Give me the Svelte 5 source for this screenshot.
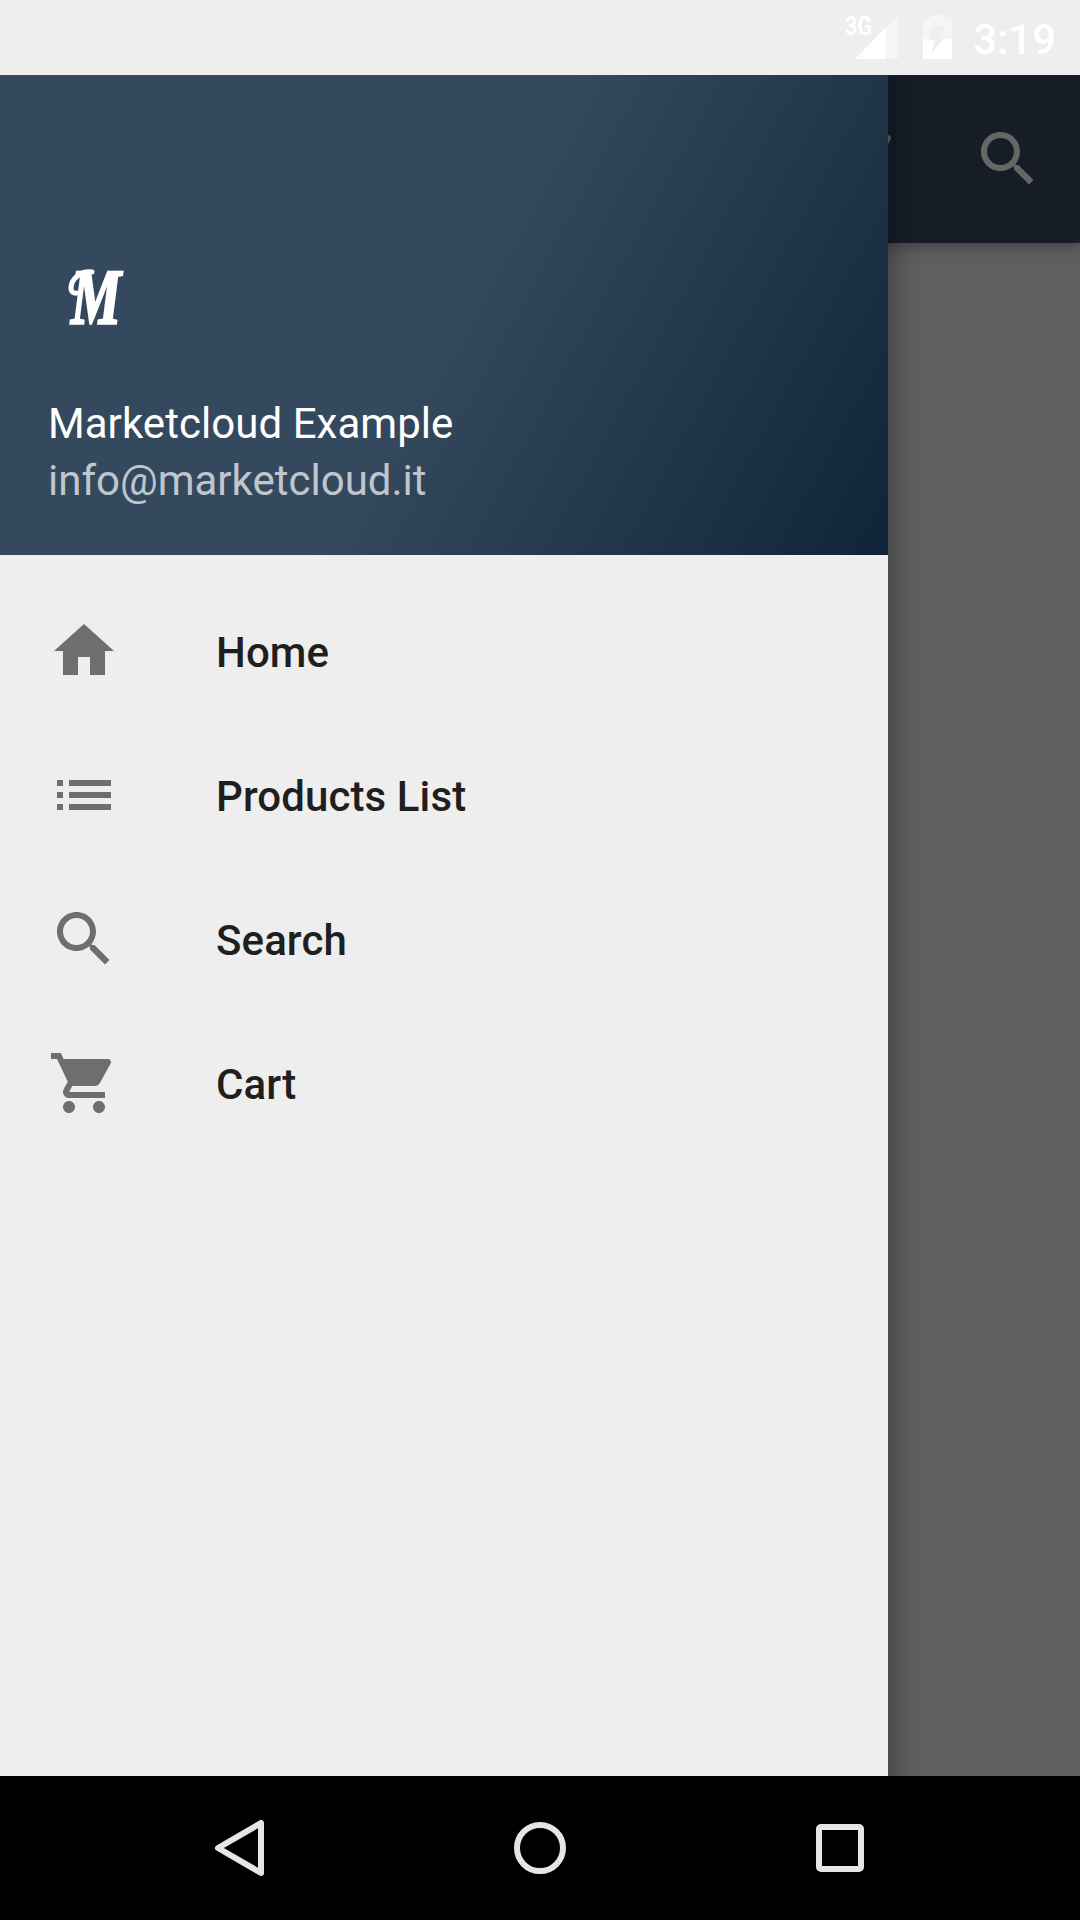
<script>
  const paths = {
    home: 'M10 20v-6h4v6h5v-8h3L12 3 2 12h3v8z',
    list: 'M3 13h2v-2H3v2zm0 4h2v-2H3v2zm0-8h2V7H3v2zm4 4h14v-2H7v2zm0 4h14v-2H7v2zM7 7v2h14V7H7z',
    search:
      'M15.5 14h-.79l-.28-.27C15.41 12.59 16 11.11 16 9.5 16 5.91 13.09 3 9.5 3S3 5.91 3 9.5 5.91 16 9.5 16c1.61 0 3.09-.59 4.23-1.57l.27.28v.79l5 4.99L20.49 19l-4.99-5zm-6 0C7.01 14 5 11.99 5 9.5S7.01 5 9.5 5 14 7.01 14 9.5 11.99 14 9.5 14z',
    cart:
      'M7 18c-1.1 0-1.99.9-1.99 2S5.9 22 7 22s2-.9 2-2-.9-2-2-2zM1 2v2h2l3.6 7.59-1.35 2.45c-.16.28-.25.61-.25.96 0 1.1.9 2 2 2h12v-2H7.42c-.14 0-.25-.11-.25-.25l.03-.12.9-1.63h7.45c.75 0 1.41-.41 1.75-1.03l3.58-6.49c.08-.14.12-.31.12-.48 0-.55-.45-1-1-1H5.21l-.94-2H1zm16 16c-1.1 0-1.99.9-1.99 2s.89 2 1.99 2 2-.9 2-2-.9-2-2-2z',
  };
  const items = [
    { icon: 'home', label: 'Home' },
    { icon: 'list', label: 'Products List' },
    { icon: 'search', label: 'Search' },
    { icon: 'cart', label: 'Cart' },
  ];
</script>

{#snippet icon(name)}
  <svg class="icon" viewBox="0 0 24 24"><path d={paths[name]} /></svg>
{/snippet}

<div class="screen">
  <header class="status">
    <svg class="signal" viewBox="0 0 54 48">
      <path class="faint" d="M42 16.5V48h12V5z" />
      <path d="M11 48h31V16.5z" />
      <text x="1" y="24" textLength="27" lengthAdjust="spacingAndGlyphs">3G</text>
    </svg>
    <svg class="battery" viewBox="0 0 29 44">
      <path class="faint" d="M7 0h15v4h7v20H0V4h7z" />
      <path d="M0 24h29v20H0z" />
      <path class="bolt" d="M9.500 10.500H23l-6.500 10H23L8 39l4-13.500H6z" />
    </svg>
    <span class="time">3:19</span>
  </header>

  <main class="stage">
    <div class="page">
      <div class="toolbar">
        {@render icon('cart')}
        {@render icon('search')}
      </div>
    </div>

    <aside class="drawer">
      <div class="account">
        <svg class="logo" viewBox="0 0 60 60">
          <path d="M25 5C13 3 4 13 4 21c0 4 3 6 6 5" />
          <text x="4" y="56" textLength="50" lengthAdjust="spacingAndGlyphs">M</text>
        </svg>
        <div class="name">Marketcloud Example</div>
        <div class="email">info@marketcloud.it</div>
      </div>
      <nav>
        {#each items as item}
          <div class="row">
            {@render icon(item.icon)}
            <span>{item.label}</span>
          </div>
        {/each}
      </nav>
    </aside>
  </main>

  <footer class="navbar">
    <svg viewBox="0 0 72 72"><path d="M57 11v50L14 36z" /></svg>
    <svg viewBox="0 0 72 72"><circle cx="36" cy="36" r="23" /></svg>
    <svg viewBox="0 0 72 72"><rect x="15" y="15" width="42" height="42" rx="2" /></svg>
  </footer>
</div>

<style>
  :global(body) {
    margin: 0;
  }
  .screen {
    width: 1080px;
    height: 1920px;
    display: flex;
    flex-direction: column;
    overflow: hidden;
    background: #eee;
    font-family: Roboto, sans-serif;
    font-size: 42px;
  }
  svg {
    display: block;
    flex: none;
    overflow: visible;
  }
  .status {
    height: 75px;
    flex: none;
    box-sizing: border-box;
    display: flex;
    justify-content: flex-end;
    align-items: flex-start;
    padding-right: 24px;
    color: #fff;
    fill: #fff;
  }
  .faint {
    fill: #f5f5f5;
  }
  .bolt {
    fill: #eee;
  }
  .signal {
    width: 54px;
    height: 48px;
    margin: 11px 25px 0 0;
  }
  .signal text {
    font-size: 26px;
    font-weight: 700;
  }
  .battery {
    width: 29px;
    height: 44px;
    margin: 15px 21px 0 0;
  }
  .time {
    font-weight: 500;
    line-height: 50px;
    margin-top: 15px;
  }
  .stage {
    flex: 1;
    min-height: 0;
    display: grid;
    grid-template: 100% / 100%;
    overflow: hidden;
  }
  .page,
  .drawer {
    grid-area: 1 / 1;
  }
  .page {
    background: #5f5f5f;
  }
  .toolbar {
    height: 168px;
    box-sizing: border-box;
    display: flex;
    justify-content: flex-end;
    align-items: center;
    gap: 72px;
    padding-right: 36px;
    background: #161d26;
    fill: #666;
    box-shadow: 0 3px 14px rgba(0, 0, 0, 0.35);
  }
  .icon {
    width: 72px;
    height: 72px;
  }
  /* Runs past the clipped bottom edge so its side shadow stays even. */
  .drawer {
    width: 888px;
    margin-bottom: -60px;
    background: #eee;
    box-shadow: 0 0 30px rgba(0, 0, 0, 0.45);
    z-index: 1;
  }
  .account {
    height: 480px;
    box-sizing: border-box;
    display: flex;
    flex-direction: column;
    padding: 192px 48px 0;
    background: linear-gradient(118.4deg, #34495e 0%, #34495e 50%, #0f2439 100%);
    color: #fff;
  }
  .logo {
    width: 60px;
    height: 60px;
    margin-left: 19px;
    fill: #fff;
  }
  .logo path {
    fill: none;
    stroke: #fff;
    stroke-width: 5;
    stroke-linecap: round;
  }
  .logo text {
    font-family: 'Liberation Serif', serif;
    font-size: 79px;
    font-weight: 700;
    font-style: italic;
    stroke: #fff;
    stroke-width: 2.5;
  }
  .name,
  .email {
    line-height: 57px;
  }
  .name {
    margin-top: 68px;
    letter-spacing: 0.05px;
  }
  .email {
    color: rgba(255, 255, 255, 0.7);
  }
  nav {
    padding-top: 24px;
  }
  .row {
    height: 144px;
    display: flex;
    align-items: center;
    gap: 96px;
    padding-left: 48px;
    color: #1f1f1f;
    fill: #6e6e6e;
    font-weight: 500;
    letter-spacing: 0.1px;
  }
  .row span {
    padding-top: 3px;
  }
  .navbar {
    height: 144px;
    flex: none;
    display: flex;
    justify-content: center;
    align-items: center;
    gap: 228px;
    background: #000;
  }
  .navbar svg {
    width: 72px;
    height: 72px;
    fill: none;
    stroke: #e6e6e6;
    stroke-width: 6;
    stroke-linejoin: round;
  }
</style>
